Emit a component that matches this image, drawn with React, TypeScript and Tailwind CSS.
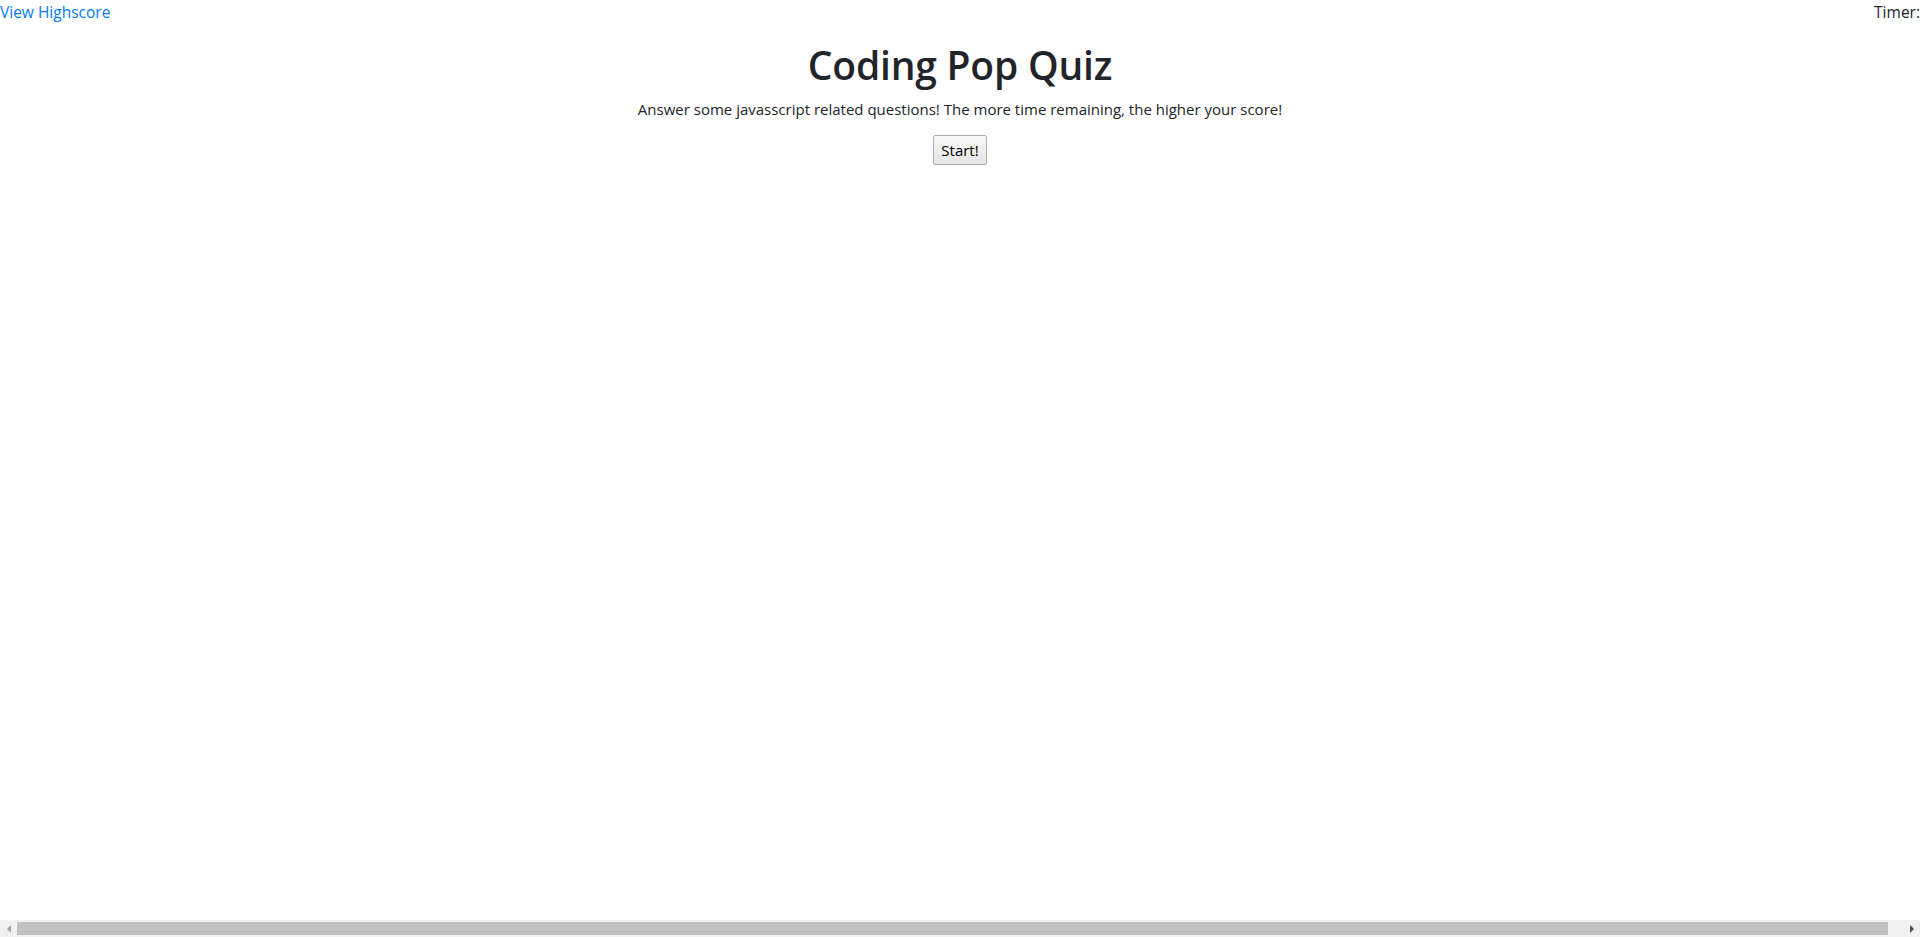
export default function App() {
  return (
    <div
      className="min-h-screen bg-white text-[#212529] text-base leading-6"
      style={{ fontFamily: '"Segoe UI", "Open Sans", sans-serif' }}
    >
      <div className="flex justify-between">
        <a href="#" className="text-[#007bff] text-[15.5px]">
          View Highscore
        </a>
        <span className="text-[15.5px]">Timer:</span>
      </div>
      <div className="flex flex-col items-center mt-[18px]">
        <h1 className="text-[39px] font-semibold leading-[1.2] mb-2 tracking-[-0.2px]">
          Coding Pop Quiz
        </h1>
        <p className="mb-[14px] text-[15px]">
          Answer some javasscript related questions! The more time remaining, the higher your score!
        </p>
        <button className="h-[30px] w-[54px] border border-[#adadad] rounded-[2px] bg-gradient-to-b from-[#f8f8f8] to-[#e6e6e6] text-[15px] text-black">
          Start!
        </button>
      </div>

      {/* horizontal scrollbar of the window */}
      <div className="fixed bottom-0 left-0 right-0 h-[17px] bg-[#f1f1f1] flex items-center">
        <div className="w-[17px] h-full flex items-center justify-center">
          <div className="w-0 h-0 border-y-[4px] border-y-transparent border-r-[4px] border-r-[#a3a3a3]" />
        </div>
        <div className="flex-1 h-full flex items-center pr-[15px]">
          <div className="h-[13px] w-full bg-[#c1c1c1]" />
        </div>
        <div className="w-[17px] h-full flex items-center justify-center">
          <div className="w-0 h-0 border-y-[4px] border-y-transparent border-l-[4px] border-l-[#505050]" />
        </div>
      </div>
    </div>
  );
}
